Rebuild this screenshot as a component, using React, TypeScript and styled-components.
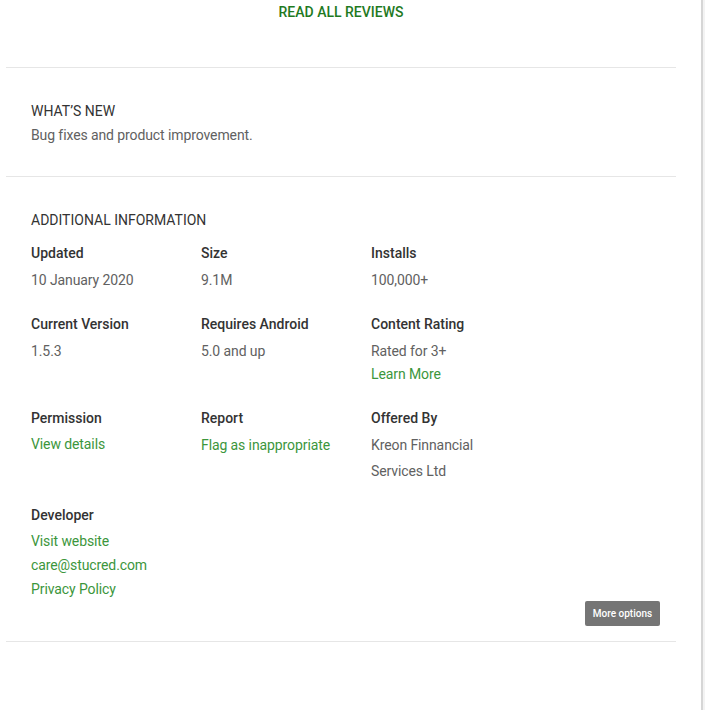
import React from "react";
import styled, { createGlobalStyle } from "styled-components";

const Global = createGlobalStyle`
  html, body { margin: 0; padding: 0; background: #fff; }
  body { font-family: Roboto, "Noto Sans", Arial, sans-serif; -webkit-font-smoothing: antialiased; }
  * { box-sizing: border-box; }
`;

const Page = styled.div`
  display: flex;
  width: 705px;
  height: 710px;
  overflow: hidden;
`;

const Main = styled.div`
  width: 701px;
  padding-left: 6px;
`;

const Column = styled.div`
  width: 670px;
`;

const ScrollStrip = styled.div`
  width: 4px;
  height: 710px;
  border-left: 2px solid #d6d6d6;
  background: #f3f3f3;
`;

const ReviewsBar = styled.div`
  height: 68px;
  padding-top: 2px;
  text-align: center;
  border-bottom: 1px solid #e6e6e6;
`;

const ReviewsLink = styled.a`
  display: inline-block;
  font-size: 14px;
  line-height: 20px;
  font-weight: 500;
  color: #1f7a1f;
  text-decoration: none;
  cursor: pointer;
`;

const Section = styled.section<{ $bottom?: number }>`
  padding: 33px 25px ${(p) => p.$bottom ?? 31}px 25px;
  border-bottom: 1px solid #e6e6e6;
`;

const Heading = styled.h2<{ $gap: number }>`
  margin: 0 0 ${(p) => p.$gap}px;
  font-size: 14px;
  line-height: 20px;
  font-weight: 400;
  color: #333;
  text-transform: uppercase;
`;

const Body = styled.div`
  font-size: 14px;
  line-height: 20px;
  color: #616161;
  letter-spacing: -0.1px;
`;

const InfoGrid = styled.div`
  display: grid;
  grid-template-columns: 170px 170px 170px;
  row-gap: 21px;
`;

const Cell = styled.div`
  display: flex;
  flex-direction: column;
`;

const Label = styled.div`
  font-size: 14px;
  line-height: 20px;
  font-weight: 500;
  color: #333;
  margin-bottom: 4px;
`;

const Value = styled.div<{ $lh?: number }>`
  font-size: 14px;
  line-height: ${(p) => p.$lh ?? 26}px;
  color: #616161;
  letter-spacing: -0.1px;
`;

const Link = styled.a<{ $lh?: number; $after?: number }>`
  display: block;
  font-size: 14px;
  line-height: ${(p) => p.$lh ?? 26}px;
  margin-bottom: ${(p) => p.$after ?? 0}px;
  color: #3c963c;
  letter-spacing: -0.1px;
  text-decoration: none;
  cursor: pointer;
`;

const ButtonRow = styled.div`
  display: flex;
  justify-content: flex-end;
  margin-right: -9px;
`;

const MoreButton = styled.button`
  width: 75px;
  height: 25px;
  border: none;
  border-radius: 2px;
  background: #757575;
  color: #fff;
  font-family: Roboto, Arial, sans-serif;
  font-size: 10px;
  font-weight: 500;
  padding: 0;
  cursor: pointer;
`;

type Item = {
  label: string;
  lines: { text: string; link?: boolean; lh?: number; after?: number }[];
};

const items: Item[] = [
  { label: "Updated", lines: [{ text: "10 January 2020" }] },
  { label: "Size", lines: [{ text: "9.1M" }] },
  { label: "Installs", lines: [{ text: "100,000+" }] },
  { label: "Current Version", lines: [{ text: "1.5.3" }] },
  { label: "Requires Android", lines: [{ text: "5.0 and up" }] },
  {
    label: "Content Rating",
    lines: [{ text: "Rated for 3+" }, { text: "Learn More", link: true, lh: 20, after: 3 }],
  },
  { label: "Permission", lines: [{ text: "View details", link: true, lh: 24 }] },
  { label: "Report", lines: [{ text: "Flag as inappropriate", link: true }] },
  { label: "Offered By", lines: [{ text: "Kreon Finnancial" }, { text: "Services Ltd" }] },
  {
    label: "Developer",
    lines: [
      { text: "Visit website", link: true, lh: 24 },
      { text: "care@stucred.com", link: true, lh: 24 },
      { text: "Privacy Policy", link: true, lh: 24 },
    ],
  },
];

export default function App() {
  return (
    <>
      <Global />
      <Page>
        <Main>
          <Column>
            <ReviewsBar>
              <ReviewsLink>READ ALL REVIEWS</ReviewsLink>
            </ReviewsBar>
            <Section>
              <Heading $gap={4}>What’s New</Heading>
              <Body>Bug fixes and product improvement.</Body>
            </Section>
            <Section $bottom={15}>
              <Heading $gap={13}>Additional Information</Heading>
              <InfoGrid>
                {items.map((it) => (
                  <Cell key={it.label}>
                    <Label>{it.label}</Label>
                    {it.lines.map((l) =>
                      l.link ? (
                        <Link key={l.text} $lh={l.lh} $after={l.after}>
                          {l.text}
                        </Link>
                      ) : (
                        <Value key={l.text} $lh={l.lh}>
                          {l.text}
                        </Value>
                      )
                    )}
                  </Cell>
                ))}
              </InfoGrid>
              <ButtonRow>
                <MoreButton>More options</MoreButton>
              </ButtonRow>
            </Section>
          </Column>
        </Main>
        <ScrollStrip />
      </Page>
    </>
  );
}
